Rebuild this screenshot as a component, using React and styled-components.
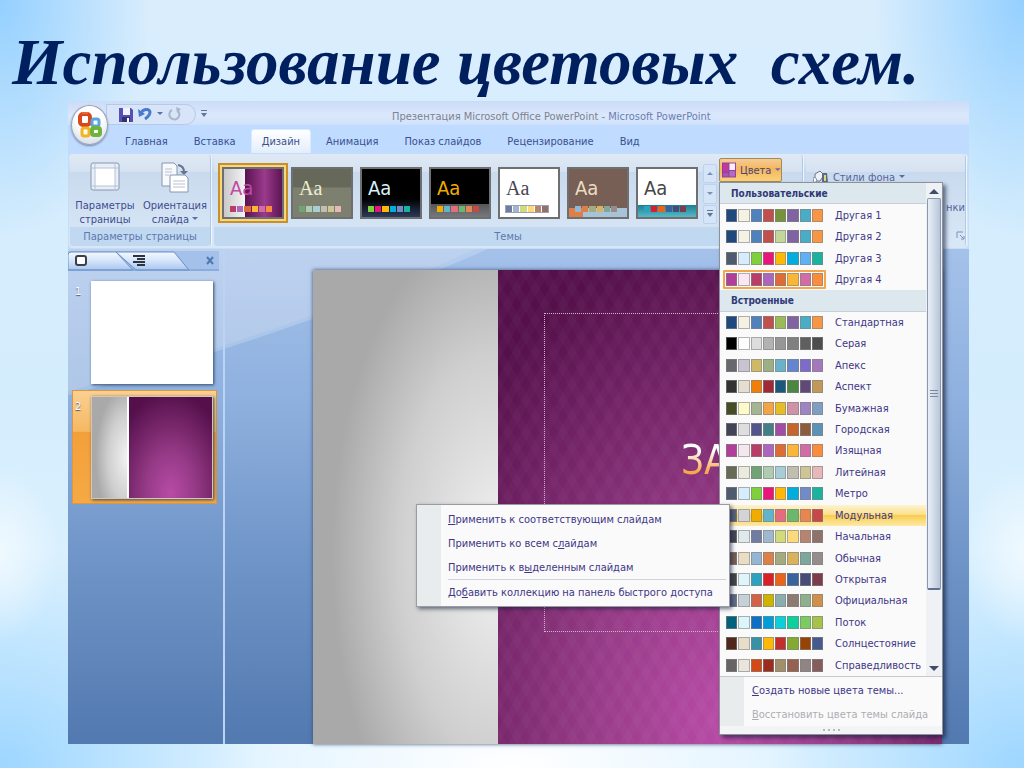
import { useState } from "react";
import styled, { createGlobalStyle } from "styled-components";

const tabs = [
  "Главная",
  "Вставка",
  "Дизайн",
  "Анимация",
  "Показ слайдов",
  "Рецензирование",
  "Вид",
];

const themes = [
  {
    name: "Изящная",
    paper: "linear-gradient(90deg, #c9c9c9, #f4f4f4 36%, #5b1450 37%, #9a3a8c 70%, #5d1553)",
    ink: "#c04aa8",
    colors: ["#b83d68", "#ac66bb", "#de6c36", "#f9b639", "#cf6da4", "#fa8d3d"],
  },
  {
    name: "Литейная",
    paper: "linear-gradient(#66695a 38%, #7d806e 39%)",
    ink: "#efeed0",
    serif: true,
    colors: ["#72a376", "#b0ccb0", "#a8cdd7", "#c0beaf", "#cec597", "#e8b7b7"],
  },
  {
    name: "Метро",
    paper: "linear-gradient(#000 62%, #2b3a5a)",
    ink: "#d8f0fa",
    colors: ["#7fd13b", "#ea157a", "#feb80a", "#00addc", "#738ac8", "#1ab39f"],
  },
  {
    name: "Модульная",
    paper: "linear-gradient(#000 72%, #55565a 73%, #77787c)",
    ink: "#f0ad00",
    colors: ["#f0ad00", "#60b5cc", "#e66c7d", "#6bb76d", "#e88651", "#c64847"],
  },
  {
    name: "Начальная",
    paper: "#fff",
    ink: "#464653",
    serif: true,
    framed: true,
    colors: ["#727ca3", "#9fb8cd", "#d2da7a", "#fada7a", "#b88472", "#8e736a"],
  },
  {
    name: "Обычная",
    paper: "linear-gradient(90deg, #dd8047 24%, #a9c3d6 25%) bottom / 100% 9px no-repeat, #775f55",
    ink: "#ebddc3",
    colors: ["#94b6d2", "#dd8047", "#a5ab81", "#d8b25c", "#7ba79d", "#968c8c"],
  },
  {
    name: "Открытая",
    paper: "linear-gradient(#fff 74%, #1b7f92 75%, #57b9c8)",
    ink: "#464646",
    colors: ["#2da2bf", "#da1f28", "#eb641b", "#39639d", "#474b78", "#7d3c4a"],
  },
];

const customSchemes = [
  ["Другая 1", "#1f497d #f5f1e4 #4f81bd #c0504d #76923c #8064a2 #4bacc6 #f79646"],
  ["Другая 2", "#1f497d #f5f1e4 #4f81bd #c0504d #c3d69b #8064a2 #4bacc6 #f79646"],
  ["Другая 3", "#4e5b6f #d6ecff #7fd13b #ea157a #feb80a #00addc #5fb0f5 #1ab39f"],
  ["Другая 4", "#b13f9a #fbe6f3 #b83d68 #ac66bb #de6c36 #f9b639 #cf6da4 #fa8d3d"],
];

const builtInSchemes = [
  ["Стандартная", "#1f497d #f5f1e4 #4f81bd #c0504d #9bbb59 #8064a2 #4bacc6 #f79646"],
  ["Серая", "#000000 #ffffff #dddddd #b2b2b2 #969696 #808080 #5f5f5f #4d4d4d"],
  ["Апекс", "#69676d #c9c2d1 #ceb966 #9cb084 #6bb1c9 #6585cf #7e6bc9 #a379bb"],
  ["Аспект", "#323232 #e3ded1 #f07f09 #9f2936 #1b587c #4e8542 #604878 #c19859"],
  ["Бумажная", "#444d26 #fefac9 #a5b592 #f3a447 #e7bc29 #d092a7 #9c85c0 #809ec2"],
  ["Городская", "#424456 #dedede #53548a #438086 #a04da3 #c4652d #8b5d3d #5c92b5"],
  ["Изящная", "#b13f9a #f4e7ed #b83d68 #ac66bb #de6c36 #f9b639 #cf6da4 #fa8d3d"],
  ["Литейная", "#676a55 #eaebde #72a376 #b0ccb0 #a8cdd7 #c0beaf #cec597 #e8b7b7"],
  ["Метро", "#4e5b6f #d6ecff #7fd13b #ea157a #feb80a #00addc #738ac8 #1ab39f"],
  ["Модульная", "#5a6378 #d4d4d6 #f0ad00 #60b5cc #e66c7d #6bb76d #e88651 #c64847"],
  ["Начальная", "#464653 #dde9ec #727ca3 #9fb8cd #d2da7a #fada7a #b88472 #8e736a"],
  ["Обычная", "#775f55 #ebddc3 #94b6d2 #dd8047 #a5ab81 #d8b25c #7ba79d #968c8c"],
  ["Открытая", "#464646 #def5fa #2da2bf #da1f28 #eb641b #39639d #474b78 #7d3c4a"],
  ["Официальная", "#646b86 #c5d1d7 #d16349 #ccb400 #8cadae #8c7b70 #8fb08c #d19049"],
  ["Поток", "#04617b #dbf5f9 #0f6fc6 #009dd9 #0bd0d9 #10cf9b #7cca62 #a5c249"],
  ["Солнцестояние", "#4f271c #e7dec9 #3891a7 #feb80a #c32d2e #84aa33 #964305 #475a8d"],
  ["Справедливость", "#696464 #e9e5dc #d34817 #9b2d1f #a28e6a #956251 #918485 #855d5d"],
];

function App() {
  const [activeTab, setActiveTab] = useState("Дизайн");
  const [currentScheme, setCurrentScheme] = useState("Другая 4");
  const [hoveredScheme, setHoveredScheme] = useState("Модульная");

  const renderScheme = ([name, colors]) => (
    <SchemeRow
      key={name}
      type="button"
      role="menuitem"
      $hot={name === hoveredScheme}
      onMouseEnter={() => setHoveredScheme(name)}
      onClick={() => setCurrentScheme(name)}
    >
      <Swatches $current={name === currentScheme}>
        {colors.split(" ").map((color, i) => (
          <Swatch key={i} $color={color} />
        ))}
      </Swatches>
      {name}
    </SchemeRow>
  );

  return (
    <Page>
      <GlobalStyle />
      <Heading>{"Использование цветовых  схем."}</Heading>

      <AppWindow>
        <OfficeButton type="button" aria-label="Office">
          <OfficeLogo />
        </OfficeButton>

        <TitleBar>
          <QuickAccess>
            <QuickButton type="button" aria-label="Сохранить">
              <SaveIcon />
            </QuickButton>
            <QuickButton type="button" aria-label="Отменить">
              <UndoIcon />
            </QuickButton>
            <Caret />
            <QuickButton type="button" aria-label="Повторить" disabled>
              <RedoIcon />
            </QuickButton>
          </QuickAccess>
          <MoreIcon />
          <WindowTitle>
            Презентация Microsoft Office PowerPoint -{" "}
            <AppName>Microsoft PowerPoint</AppName>
          </WindowTitle>
        </TitleBar>

        <TabBar>
          {tabs.map((tab) => (
            <Tab
              key={tab}
              type="button"
              $active={tab === activeTab}
              onClick={() => setActiveTab(tab)}
            >
              {tab}
            </Tab>
          ))}
        </TabBar>

        <Ribbon>
          <PageGroup>
            <GroupBody>
              <BigButton type="button">
                <PageIcon />
                <span>Параметры</span>
                <span>страницы</span>
              </BigButton>
              <BigButton type="button">
                <OrientationIcon />
                <span>Ориентация</span>
                <span>
                  слайда <Caret />
                </span>
              </BigButton>
            </GroupBody>
            <GroupLabel>Параметры страницы</GroupLabel>
          </PageGroup>

          <ThemesGroup>
            <GroupBody>
              <ThemeList>
                {themes.map((theme, i) => (
                  <ThemeTile
                    key={theme.name}
                    type="button"
                    aria-label={theme.name}
                    $paper={theme.paper}
                    $ink={theme.ink}
                    $serif={theme.serif}
                    $selected={i === 0}
                  >
                    Aa
                    <TileColors $framed={theme.framed}>
                      {theme.colors.map((color) => (
                        <TileColor key={color} $color={color} />
                      ))}
                    </TileColors>
                  </ThemeTile>
                ))}
              </ThemeList>
              <ThemeScroll>
                <ScrollStep type="button" aria-label="Вверх">
                  <Triangle $up />
                </ScrollStep>
                <ScrollStep type="button" aria-label="Вниз">
                  <Triangle />
                </ScrollStep>
                <ScrollStep type="button" aria-label="Все темы">
                  <MoreIcon />
                </ScrollStep>
              </ThemeScroll>
              <ColorsAnchor>
                <ColorsButton type="button" aria-expanded="true">
                  <ColorsIcon />
                  Цвета
                  <Caret />
                </ColorsButton>

                <ColorsMenu role="menu">
                  <SchemeArea>
                    <SchemeList>
                      <SchemeHeader>Пользовательские</SchemeHeader>
                      {customSchemes.map(renderScheme)}
                      <SchemeHeader>Встроенные</SchemeHeader>
                      {builtInSchemes.map(renderScheme)}
                    </SchemeList>
                    <ScrollBar>
                      <Triangle $up $large />
                      <ScrollThumb />
                      <ScrollRest />
                      <Triangle $large />
                    </ScrollBar>
                  </SchemeArea>
                  <MenuFooter>
                    <MenuItem type="button" role="menuitem">
                      <u>С</u>оздать новые цвета темы...
                    </MenuItem>
                    <MenuItem type="button" role="menuitem" disabled>
                      <u>В</u>осстановить цвета темы слайда
                    </MenuItem>
                  </MenuFooter>
                  <Grip>
                    <GripDot />
                    <GripDot />
                    <GripDot />
                    <GripDot />
                  </Grip>
                  <ContextMenu role="menu">
                    <MenuItem type="button" role="menuitem">
                      <u>П</u>рименить к соответствующим слайдам
                    </MenuItem>
                    <MenuItem type="button" role="menuitem">
                      Применить ко всем с<u>л</u>айдам
                    </MenuItem>
                    <MenuItem type="button" role="menuitem">
                      Применить к в<u>ы</u>деленным слайдам
                    </MenuItem>
                    <MenuLine />
                    <MenuItem type="button" role="menuitem">
                      До<u>б</u>авить коллекцию на панель быстрого доступа
                    </MenuItem>
                  </ContextMenu>
                </ColorsMenu>
              </ColorsAnchor>
            </GroupBody>
            <GroupLabel>Темы</GroupLabel>
          </ThemesGroup>

          <BackgroundGroup>
            <StylesButton type="button">
              <StylesIcon />
              Стили фона
              <Caret />
            </StylesButton>
            <ClippedLabel>нки</ClippedLabel>
            <LauncherIcon />
          </BackgroundGroup>
        </Ribbon>

        <Workspace>
          <Swoosh viewBox="0 0 901 494" preserveAspectRatio="none">
            <path d="M0 146Q230 84 420 0H901V0H0Z" fill="#fff" opacity="0.2" />
            <path d="M0 142Q226 82 408 0H0Z" fill="#fff" opacity="0.1" />
          </Swoosh>
          <SidePane>
            <PaneTabs />
            <SlideItem>
              <SlideNumber>1</SlideNumber>
              <BlankThumb />
            </SlideItem>
            <SlideItem $selected>
              <SlideNumber>2</SlideNumber>
              <Thumb>
                <GreyBand />
                <PurpleArea />
              </Thumb>
            </SlideItem>
          </SidePane>
          <Stage>
            <Slide>
              <GreyBand />
              <PurpleArea $patterned>
                <Placeholder>
                  <SlideTitle>ЗА</SlideTitle>
                </Placeholder>
              </PurpleArea>
            </Slide>
          </Stage>
        </Workspace>
      </AppWindow>
    </Page>
  );
}

export default App;

const OfficeLogo = () => (
  <svg width="28" height="30" viewBox="0 0 28 30" fill="none">
    <rect x="4" y="4" width="10" height="11" rx="3" stroke="#d9481c" strokeWidth="4" />
    <rect x="16" y="9" width="7" height="7" rx="2" stroke="#58a6dc" strokeWidth="3" />
    <rect x="6" y="18" width="7" height="8" rx="2" stroke="#f3b423" strokeWidth="3" />
    <rect x="16" y="18" width="8" height="7" rx="2" stroke="#6fb23c" strokeWidth="4" />
    <path d="M6 3h6" stroke="#f08a4c" strokeWidth="1" />
  </svg>
);

const SaveIcon = () => (
  <svg width="14" height="15" viewBox="0 0 14 15">
    <path d="M0 1h12l2 2v12H0Z" fill="#5450b4" />
    <rect x="4" y="1" width="7" height="7" fill="#f3f3fd" />
    <rect x="3" y="10" width="8" height="5" fill="#33306f" />
    <rect x="8" y="11" width="2" height="4" fill="#fff" />
  </svg>
);

const UndoIcon = () => (
  <svg width="14" height="14" viewBox="0 0 14 14" fill="none">
    <path d="M3 6C5 2 11 1 12 5c0 3-2 5-5 7" stroke="#4a7ad0" strokeWidth="3" />
    <path d="M0 2l1 8 6-3Z" fill="#4a7ad0" />
  </svg>
);

const RedoIcon = () => (
  <svg width="14" height="14" viewBox="0 0 14 14" fill="none">
    <path d="M4 3a5 5 0 1 0 6 1" stroke="#a9b6cc" strokeWidth="2" />
    <path d="M8 0l5 2-4 4Z" fill="#a9b6cc" />
  </svg>
);

const MoreIcon = () => (
  <svg width="8" height="8" viewBox="0 0 8 8" fill="#5f769c">
    <rect x="1" width="6" height="1" />
    <path d="M1 3h6L4 7Z" />
  </svg>
);

const Caret = () => (
  <svg width="6" height="8" viewBox="0 0 6 8" fill="#5a6fa5">
    <path d="M0 2h6L3 5Z" />
  </svg>
);

const PageIcon = () => (
  <svg width="30" height="36" viewBox="0 0 30 36" fill="none">
    <rect x="1" y="4" width="28" height="27" rx="2" fill="#e9eff8" stroke="#8796ae" />
    <rect x="5" y="9" width="20" height="18" fill="#fff" />
    <path d="M5 4v27M25 4v27M1 9h28M1 27h28" stroke="#b5c2d6" />
  </svg>
);

const OrientationIcon = () => (
  <svg width="30" height="36" viewBox="0 0 30 36" fill="none">
    <path d="M2 4h12l3 3v20H2Z" fill="#f7f9fc" stroke="#8796ae" />
    <path d="M5 10h7M5 13h7M5 16h4" stroke="#b5c2d6" />
    <path d="M18 6q6 1 6 7" stroke="#66758f" strokeWidth="2" />
    <path d="M20 12h8l-4 4Z" fill="#66758f" />
    <path d="M10 16h15l3 3v14H10Z" fill="#fff" stroke="#8796ae" />
    <path d="M13 22h12M13 25h12M13 28h12" stroke="#b5c2d6" />
  </svg>
);

const ColorsIcon = () => (
  <svg width="15" height="16" viewBox="0 0 15 16">
    <rect width="15" height="16" fill="#8e3d9c" />
    <rect x="1" y="1" width="6" height="9" fill="#c03a9c" />
    <rect x="8" y="1" width="6" height="7" fill="#fdeffa" />
    <rect x="1" y="11" width="6" height="4" fill="#a255b8" />
    <rect x="8" y="9" width="6" height="6" fill="#b56ac0" />
  </svg>
);

const StylesIcon = () => (
  <svg width="16" height="14" viewBox="0 0 16 14">
    <path d="M2 4l5-3 4 4-4 6H2Z" fill="#eef2f8" stroke="#66758f" />
    <path d="M9 3h5l1 9H9Z" fill="#5b6b86" />
    <path d="M11 5h2v6h-2Z" fill="#e4d777" />
    <path d="M0 8q3-2 4 3l-3 2Z" fill="#fff" stroke="#7c8ba4" />
  </svg>
);

const LauncherIcon = () => (
  <svg width="9" height="9" viewBox="0 0 9 9" fill="none" stroke="#7d93b8">
    <path d="M1 7V1h6M4 4l4 4M8 5v3H5" />
  </svg>
);

const PaneTabs = () => (
  <PaneTabsDrawing viewBox="0 0 151 20" preserveAspectRatio="none">
    <defs>
      <linearGradient id="pane-tab" x1="0" y1="0" x2="0" y2="1">
        <stop offset="0" stopColor="#f4f9ff" />
        <stop offset="0.5" stopColor="#d3e4fa" />
        <stop offset="1" stopColor="#a9c7ef" />
      </linearGradient>
    </defs>
    <path d="M0 0h151v20H0Z" fill="#a3c1ea" />
    <path d="M48 1h58l15 18H68Z" fill="url(#pane-tab)" stroke="#6b8fc4" />
    <path d="M0 19V4q0-3 3-3h45l17 18Z" fill="url(#pane-tab)" stroke="#6b8fc4" />
    <path d="M0 19h151" stroke="#7398cd" />
    <rect x="8" y="5" width="10" height="9" rx="2" fill="#fff" stroke="#3c4048" strokeWidth="2" />
    <path d="M65 5h12M69 8h8M65 11h12M69 14h8" stroke="#30343c" strokeWidth="2" />
    <path d="M139 6l6 7M145 6l-6 7" stroke="#4f78b5" strokeWidth="2" />
  </PaneTabsDrawing>
);

const GlobalStyle = createGlobalStyle`
  * {
    box-sizing: border-box;
  }
  body {
    margin: 0;
    font-family: "DejaVu Sans Condensed", "Noto Sans", sans-serif;
    font-size: 11px;
    color: #3d4c8f;
  }
  button {
    margin: 0;
    padding: 0;
    border: none;
    background: none;
    font: inherit;
    color: inherit;
  }
`;

const Page = styled.div`
  display: flex;
  flex-direction: column;
  min-height: 100vh;
  padding: 0 55px 24px 68px;
  background:
    radial-gradient(ellipse 60px 90px at 0 72%, #eff9ff, transparent),
    radial-gradient(ellipse 60px 90px at 100% 72%, #eff9ff, transparent),
    radial-gradient(ellipse 300px 130px at 50% 100%, #ffffff, transparent),
    radial-gradient(ellipse 150px 240px at 0 0, #94d0ff, transparent),
    radial-gradient(ellipse 150px 240px at 100% 0, #94d0ff, transparent),
    radial-gradient(ellipse 260px 220px at 0 100%, #9dd6ff, transparent),
    radial-gradient(ellipse 260px 220px at 100% 100%, #9dd6ff, transparent),
    linear-gradient(#d9edfd, #d4edfd 50%, #e0f3ff);
`;

const Heading = styled.h1`
  margin: 0 -40px 0 -56px;
  height: 101px;
  padding-top: 22px;
  font: italic bold 65px/80px "Liberation Serif", serif;
  white-space: pre;
  color: #001f5f;
`;

const AppWindow = styled.main`
  position: relative;
  flex: 1;
  display: flex;
  flex-direction: column;
  background: #bfdbff;
`;

const OfficeButton = styled.button`
  position: absolute;
  top: 4px;
  left: 3px;
  z-index: 1;
  display: flex;
  align-items: center;
  justify-content: center;
  width: 37px;
  height: 40px;
  border: 1px solid #98a5bb;
  border-radius: 50%;
  background: radial-gradient(circle at 50% 30%, #ffffff 40%, #ccd4e0);
  box-shadow: 0 1px 2px #7486a5;
`;

const TitleBar = styled.header`
  display: flex;
  align-items: center;
  height: 24px;
  padding: 2px 0 0 38px;
  background: linear-gradient(#cbdcf7, #dbe8fb 60%, #cfe1fb);
`;

const QuickAccess = styled.div`
  display: flex;
  align-items: center;
  gap: 5px;
  height: 21px;
  width: 90px;
  margin-right: 4px;
  padding-left: 12px;
  border: 1px solid #b5c9e8;
  border-radius: 0 11px 11px 0;
  background: #d8e5f8;
`;

const QuickButton = styled.button`
  display: flex;
`;

const WindowTitle = styled.div`
  flex: 1;
  padding: 4px 0 0 184px;
  color: #7c828f;
  white-space: nowrap;
`;

const AppName = styled.span`
  color: #6a7db4;
`;

const TabBar = styled.nav`
  display: flex;
  align-items: flex-end;
  gap: 4px;
  height: 28px;
  padding-left: 46px;
`;

const Tab = styled.button`
  height: 24px;
  padding: 0 10px;
  border: 1px solid ${({ $active }) => ($active ? "#d9ebff" : "transparent")};
  border-bottom: none;
  border-radius: 3px 3px 0 0;
  background: ${({ $active }) =>
    $active ? "linear-gradient(#ffffff, #e3eefb)" : "transparent"};
  color: #3a508f;
`;

const Ribbon = styled.section`
  display: flex;
  gap: 4px;
  height: 96px;
  padding: 1px 3px 2px 1px;
  border-radius: 4px;
  border: 1px solid #c7dcf6;
  background: linear-gradient(#dee9f6, #c7d8ed 20%, #d8e6f6 80%);
`;

const Group = styled.div`
  display: flex;
  flex-direction: column;
  border-radius: 3px;
  background: linear-gradient(#dfe9f5, #d6e2f1 18%, #c9daee 19%, #d9e8f7);
  box-shadow: 1px 0 0 #b0c7e5, 2px 0 0 #edf5ff;
`;

const PageGroup = styled(Group)`
  width: 140px;
`;

const ThemesGroup = styled(Group)`
  flex: 1;
`;

const BackgroundGroup = styled(Group)`
  width: 159px;
  align-items: flex-end;
  justify-content: space-between;
  padding: 15px 0 6px 0;
`;

const GroupBody = styled.div`
  flex: 1;
  display: flex;
`;

const GroupLabel = styled.div`
  height: 19px;
  border-radius: 0 0 3px 3px;
  background: #c1d8f1;
  line-height: 20px;
  text-align: center;
  color: #5c79ab;
`;

const BigButton = styled.button`
  flex: 1;
  display: flex;
  flex-direction: column;
  align-items: center;
  min-width: 0;
  padding-top: 4px;
  line-height: 14px;

  > svg {
    margin-bottom: 4px;
  }
`;

const ThemeList = styled.div`
  display: flex;
  gap: 7px;
  padding: 12px 0 0 8px;
`;

const ThemeTile = styled.button`
  display: flex;
  flex-direction: column;
  justify-content: space-between;
  width: 62px;
  height: 52px;
  padding: 6px 4px 5px 6px;
  border: 2px solid #6d6f70;
  background: ${({ $paper }) => $paper};
  box-shadow: ${({ $selected }) =>
    $selected ? "0 0 0 2px #f7d777, 0 0 0 4px #c98f2d" : "none"};
  font-family: ${({ $serif }) =>
    $serif ? '"Liberation Serif", serif' : '"DejaVu Sans Condensed", sans-serif'};
  font-size: 20px;
  line-height: 26px;
  text-align: left;
  color: ${({ $ink }) => $ink};
`;

const TileColors = styled.div`
  display: flex;
  gap: 1px;
  width: 42px;
  outline: ${({ $framed }) => ($framed ? "1px solid #9aa3b5" : "none")};
`;

const TileColor = styled.span`
  flex: 1;
  height: 6px;
  background: ${({ $color }) => $color};
`;

const ThemeScroll = styled.div`
  display: flex;
  flex-direction: column;
  gap: 1px;
  width: 14px;
  margin: 9px 2px 3px 5px;
`;

const ScrollStep = styled.button`
  flex: 1;
  display: flex;
  align-items: center;
  justify-content: center;
  border: 1px solid #bdd2ee;
  border-radius: 2px;
  background: #d5e4f7;
`;

const Triangle = styled.span`
  border: ${({ $large }) => ($large ? "5px" : "3px")} solid transparent;
  ${({ $up }) => ($up ? "border-top-width: 0;" : "border-bottom-width: 0;")}
  ${({ $up }) => ($up ? "border-bottom-color" : "border-top-color")}: ${({
    $large,
  }) => ($large ? "#3f4c6b" : "#7592bd")};
`;

const ColorsAnchor = styled.div`
  position: relative;
  padding-top: 3px;
`;

const ColorsButton = styled.button`
  display: flex;
  align-items: center;
  gap: 4px;
  width: 63px;
  height: 24px;
  padding-left: 2px;
  border: 1px solid #a28a5b;
  border-radius: 2px;
  background: linear-gradient(#f3cd96, #f6b55d 45%, #fbd17b);
  color: #4a4675;
`;

const ColorsMenu = styled.div`
  position: absolute;
  top: 27px;
  left: 0;
  z-index: 2;
  width: 224px;
  border: 1px solid #8d9199;
  background: #fafafa;
  box-shadow: 3px 3px 4px rgba(20, 30, 60, 0.6);
  color: #3e3787;
`;

const SchemeArea = styled.div`
  display: flex;
  border-bottom: 1px solid #c5c8cc;
`;

const SchemeList = styled.div`
  flex: 1;
  display: grid;
  grid-auto-rows: 1fr;
  height: 493px;
`;

const SchemeHeader = styled.div`
  display: flex;
  align-items: center;
  padding-left: 11px;
  background: #dde7ee;
  border-bottom: 1px solid #c5d0da;
  font-weight: bold;
  font-size: 10px;
  color: #2d3a77;
`;

const SchemeRow = styled.button`
  display: flex;
  align-items: center;
  gap: 9px;
  padding-left: 3px;
  text-align: left;
  background: ${({ $hot }) =>
    $hot
      ? "linear-gradient(#fdf3cf, #fbe08d 45%, #f8cd52 50%, #fdeaa6)"
      : "transparent"};
  white-space: nowrap;
`;

const Swatches = styled.span`
  display: flex;
  gap: 1px;
  width: 103px;
  padding: 1px;
  border: 2px solid ${({ $current }) => ($current ? "#f3a64c" : "transparent")};
  border-radius: 1px;
`;

const Swatch = styled.span`
  flex: 1;
  height: 13px;
  border: 1px solid rgba(130, 130, 130, 0.6);
  background: ${({ $color }) => $color};
`;

const ScrollBar = styled.div`
  display: flex;
  flex-direction: column;
  align-items: center;
  width: 16px;
  padding: 6px 0 5px;
  background: #eff1f4;
`;

const ScrollThumb = styled.div`
  flex: 390;
  width: 14px;
  margin-top: 4px;
  border: 1px solid #8a97ad;
  border-bottom: 2px solid #5f7191;
  border-radius: 2px;
  background:
    linear-gradient(#7c899f 1px, transparent 1px 3px, #7c899f 3px 4px, transparent 4px 6px, #7c899f 6px) center / 8px 7px no-repeat,
    linear-gradient(90deg, #e9eff7, #b8c6da);
`;

const ScrollRest = styled.div`
  flex: 76;
`;

const MenuFooter = styled.div`
  border-left: 24px solid #e9eced;
  padding: 1px 0 0 8px;
`;

const MenuItem = styled.button`
  display: block;
  width: 100%;
  height: 24px;
  text-align: left;
  white-space: nowrap;

  &:disabled {
    color: #adadb3;
  }
`;

const Grip = styled.div`
  display: flex;
  justify-content: center;
  align-items: center;
  gap: 3px;
  height: 8px;
  background: #f2f4f6;
`;

const GripDot = styled.span`
  width: 2px;
  height: 2px;
  background: #b4bac6;
`;

// flyout opened next to the hovered colour scheme
const ContextMenu = styled.div`
  position: absolute;
  top: 321px;
  right: 212px;
  width: 314px;
  padding: 2px 0 2px 32px;
  border: 1px solid #9a9ca3;
  border-left: none;
  background: linear-gradient(90deg, #9a9ca3 1px, #e9eced 1px 25px, #fafafa 25px);
  box-shadow: 2px 2px 4px rgba(20, 30, 60, 0.6);
`;

const MenuLine = styled.div`
  height: 1px;
  margin: 0 3px 0 0;
  background: #cfd2d6;
`;

const StylesButton = styled.button`
  display: flex;
  align-items: center;
  gap: 4px;
  padding-right: 60px;
  color: #56659c;
`;

const ClippedLabel = styled.span`
  color: #56659c;
`;

const Workspace = styled.section`
  position: relative;
  flex: 1;
  display: flex;
  background: linear-gradient(#a4c1ea, #8fb1df 30%, #7095c8 62%, #5279b0);
`;

const Swoosh = styled.svg`
  position: absolute;
  width: 100%;
  height: 100%;
`;

const SidePane = styled.aside`
  position: relative;
  width: 157px;
  padding: 2px 4px 0 0;
  border-right: 2px solid #bad4f6;
`;

const PaneTabsDrawing = styled.svg`
  display: block;
  width: 151px;
  height: 20px;
  margin-bottom: 4px;
`;

const SlideItem = styled.div`
  display: flex;
  justify-content: space-between;
  width: 145px;
  margin: 0 0 1px 4px;
  padding: 5px 3px 4px 2px;
  border: 1px solid ${({ $selected }) => ($selected ? "#dd9741" : "transparent")};
  background: ${({ $selected }) =>
    $selected ? "linear-gradient(#fbd092, #f5b862 36%, #f3a03a 37%, #f6a944)" : "none"};
`;

const SlideNumber = styled.span`
  padding-top: 4px;
  color: #fff;
  text-shadow: 0 1px 1px #46597c;
`;

const Thumb = styled.div`
  display: flex;
  width: 122px;
  height: 103px;
  border: 1px solid #d9c6b0;
  background: #fff;
  box-shadow: 1px 1px 3px #34486b;
`;

const BlankThumb = styled(Thumb)`
  border-color: #fff;
`;

const GreyBand = styled.div`
  flex: 185;
  background: radial-gradient(ellipse 90% 70% at 100% 60%, #f2f2f2, #cfcfcf 60%, #a9a9a9);
`;

const PurpleArea = styled.div`
  flex: 444;
  background:
    ${({ $patterned }) =>
      $patterned
        ? "repeating-linear-gradient(60deg, rgba(255, 255, 255, 0.02) 0 8px, transparent 8px 16px), repeating-linear-gradient(-60deg, rgba(255, 255, 255, 0.02) 0 8px, transparent 8px 16px),"
        : ""}
    radial-gradient(ellipse 75% 100% at 50% 95%, #b84ba6, #953a86 40%, #55104b);

  ${Thumb} & {
    margin-left: 2px;
  }
`;

const Stage = styled.div`
  position: relative;
  flex: 1;
  display: flex;
  padding: 21px 27px 0 88px;
`;

const Slide = styled.div`
  flex: 1;
  display: flex;
  box-shadow: 0 0 4px #3c4f72;
`;

const Placeholder = styled.div`
  display: flex;
  align-items: center;
  height: 319px;
  margin: 43px 0 0 46px;
  padding-left: 136px;
  border: 1px dotted #d3b0cf;
  border-right: none;
`;

const SlideTitle = styled.span`
  margin-bottom: 26px;
  font-family: "DejaVu Sans Condensed", sans-serif;
  font-size: 40px;
  line-height: 48px;
  color: transparent;
  background: linear-gradient(#fff 30%, #f7a64a 75%);
  background-clip: text;
`;
